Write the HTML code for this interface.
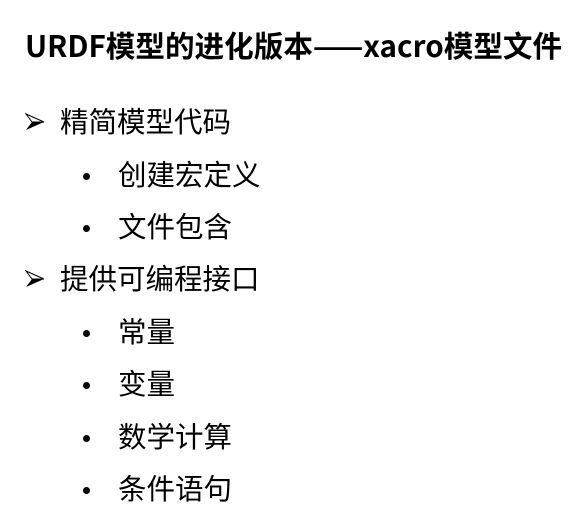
<!DOCTYPE html>
<html><head><meta charset="utf-8"><style>
body{margin:0;width:581px;height:525px;background:#fff;position:relative;overflow:hidden;font-family:"Liberation Sans","Noto Sans CJK SC",sans-serif;color:#000}
.t{position:absolute;left:25px;top:25px;font-family:"Noto Sans CJK SC",sans-serif;font-size:29.6px;font-weight:bold;white-space:nowrap;line-height:40px}
.l{position:absolute;white-space:nowrap;font-size:28.5px;line-height:36px}
.a{left:60px}.s{left:118px}
.ar{position:absolute;left:25px;width:20px;height:18px}
.b{position:absolute;left:83px;width:7px;height:7px;border-radius:50%;background:#000}
</style></head><body>
<div class="t">URDF模型的进化版本——xacro模型文件</div>
<svg class="ar" style="top:113px" viewBox="0 0 20 18"><path d="M1 1 L19 9 L1 17 L7 9 Z" fill="#000"/><path d="M1 1 L19 9 L7 9 Z" fill="#fff" stroke="#000" stroke-width="1"/></svg>
<div class="l a" style="top:105px">精简模型代码</div>
<div class="b" style="top:173px"></div><div class="l s" style="top:158px">创建宏定义</div>
<div class="b" style="top:225px"></div><div class="l s" style="top:210px">文件包含</div>
<svg class="ar" style="top:270px" viewBox="0 0 20 18"><path d="M1 1 L19 9 L1 17 L7 9 Z" fill="#000"/><path d="M1 1 L19 9 L7 9 Z" fill="#fff" stroke="#000" stroke-width="1"/></svg>
<div class="l a" style="top:262px">提供可编程接口</div>
<div class="b" style="top:330px"></div><div class="l s" style="top:315px">常量</div>
<div class="b" style="top:382px"></div><div class="l s" style="top:367px">变量</div>
<div class="b" style="top:435px"></div><div class="l s" style="top:420px">数学计算</div>
<div class="b" style="top:487px"></div><div class="l s" style="top:472px">条件语句</div>
</body></html>
